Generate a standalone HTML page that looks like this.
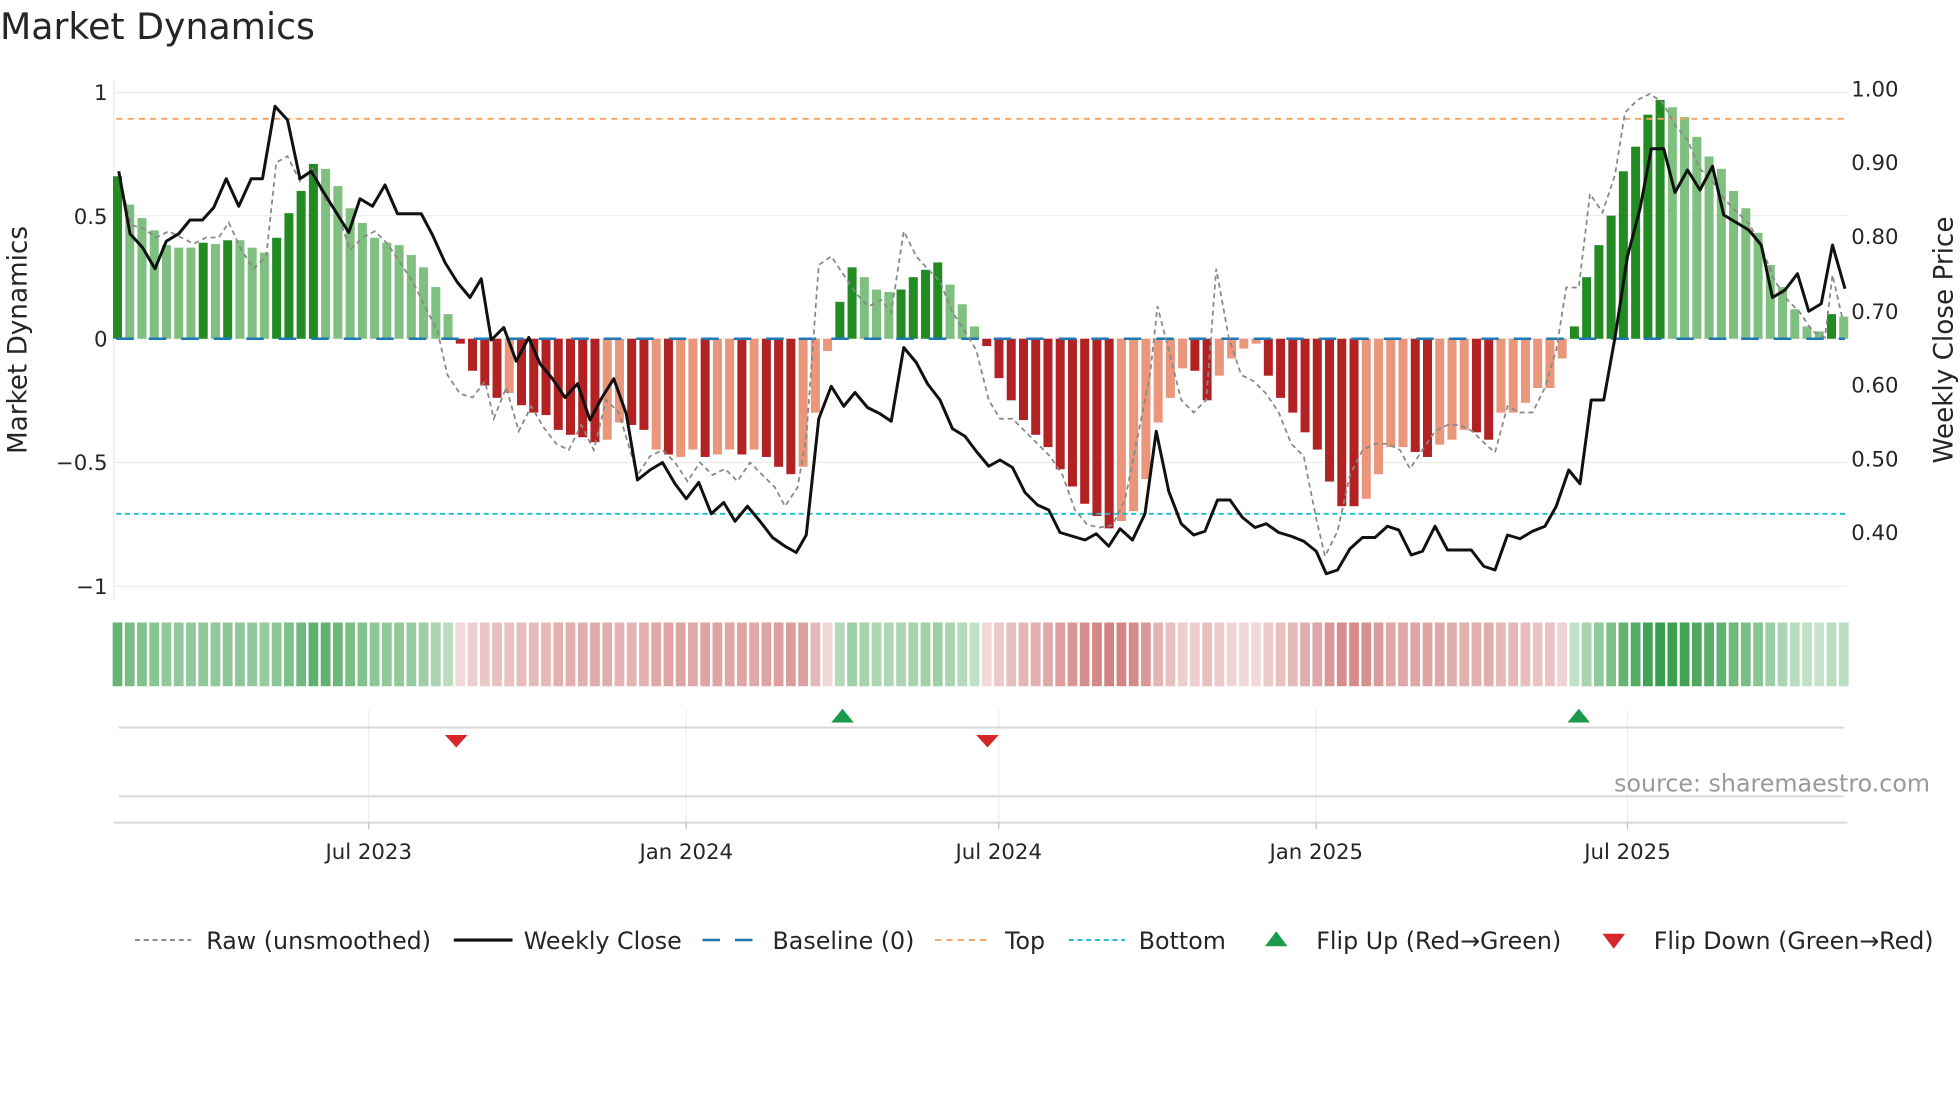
<!DOCTYPE html>
<html><head><meta charset="utf-8"><style>
html,body{margin:0;padding:0;background:#fff;width:1960px;height:1102px;overflow:hidden}
svg text{font-family:"DejaVu Sans","Liberation Sans",sans-serif;fill:#262626}
</style></head><body>
<svg id="s" width="1960" height="1102" viewBox="0 0 1568 881.6" xmlns="http://www.w3.org/2000/svg">
<text x="0" y="31" font-size="29" fill="#333">Market Dynamics</text>
<g stroke="#ececec" stroke-width="1">
<line x1="91" y1="74" x2="1478" y2="74"/><line x1="91" y1="172.5" x2="1478" y2="172.5"/>
<line x1="91" y1="271" x2="1478" y2="271"/><line x1="91" y1="370" x2="1478" y2="370"/>
<line x1="91" y1="469" x2="1478" y2="469"/><line x1="91" y1="64" x2="91" y2="480"/>
</g>
<g font-size="17" text-anchor="end">
<text x="86" y="80">1</text><text x="86" y="179">0.5</text><text x="86" y="277">0</text>
<text x="86" y="376">−0.5</text><text x="86" y="475">−1</text>
</g>
<g font-size="17">
<text x="1481" y="77">1.00</text><text x="1481" y="136">0.90</text><text x="1481" y="195">0.80</text>
<text x="1481" y="255">0.70</text><text x="1481" y="314">0.60</text><text x="1481" y="373">0.50</text><text x="1481" y="432">0.40</text>
</g>
<text transform="translate(21,272) rotate(-90)" font-size="21" text-anchor="middle">Market Dynamics</text>
<text transform="translate(1562,272) rotate(-90)" font-size="21" text-anchor="middle">Weekly Close Price</text>
<g id="bars"></g>
<line x1="93" y1="271" x2="1476" y2="271" stroke="#1f77b4" stroke-width="2" stroke-dasharray="14,12"/>
<line x1="93" y1="95" x2="1476" y2="95" stroke="#f4a460" stroke-width="1.5" stroke-dasharray="5,4"/>
<line x1="93" y1="411" x2="1476" y2="411" stroke="#17becf" stroke-width="1.5" stroke-dasharray="4,3"/>
<polyline id="raw" fill="none" stroke="#888" stroke-width="1.4" stroke-dasharray="4,3"/>
<polyline id="close" fill="none" stroke="#111" stroke-width="2.4" stroke-linejoin="round"/>
<g id="heat"></g>
<g stroke="#eee" stroke-width="1">
<line x1="295" y1="568" x2="295" y2="658"/><line x1="549" y1="568" x2="549" y2="658"/>
<line x1="799" y1="568" x2="799" y2="658"/><line x1="1053" y1="568" x2="1053" y2="658"/><line x1="1302" y1="568" x2="1302" y2="658"/>
</g>
<g stroke="#d6d6d6" stroke-width="1.5">
<line x1="95" y1="582" x2="1475" y2="582"/><line x1="95" y1="637" x2="1475" y2="637"/><line x1="91" y1="658" x2="1478" y2="658"/>
</g>
<g stroke="#bbb"><line x1="295" y1="658" x2="295" y2="663"/><line x1="549" y1="658" x2="549" y2="663"/><line x1="799" y1="658" x2="799" y2="663"/><line x1="1053" y1="658" x2="1053" y2="663"/><line x1="1302" y1="658" x2="1302" y2="663"/></g>
<polygon points="356,588 374,588 365,598" fill="#d62728"/>
<polygon points="781,588 799,588 790,598" fill="#d62728"/>
<polygon points="665,578 683,578 674,567" fill="#1a9a4a"/>
<polygon points="1254,578 1272,578 1263,567" fill="#1a9a4a"/>
<text x="1544" y="633" font-size="19" text-anchor="end" fill="#999" style="fill:#999">source: sharemaestro.com</text>
<g font-size="17" text-anchor="middle">
<text x="295" y="687">Jul 2023</text><text x="549" y="687">Jan 2024</text><text x="799" y="687">Jul 2024</text>
<text x="1053" y="687">Jan 2025</text><text x="1302" y="687">Jul 2025</text>
</g>
<g font-size="19">
<line x1="108" y1="752" x2="153" y2="752" stroke="#888" stroke-width="1.5" stroke-dasharray="4,3"/>
<text x="165" y="759">Raw (unsmoothed)</text>
<line x1="363" y1="752" x2="410" y2="752" stroke="#111" stroke-width="2.5"/>
<text x="419" y="759">Weekly Close</text>
<line x1="562" y1="752" x2="607" y2="752" stroke="#1f77b4" stroke-width="2" stroke-dasharray="14,12"/>
<text x="618" y="759">Baseline (0)</text>
<line x1="748" y1="752" x2="793" y2="752" stroke="#f4a460" stroke-width="1.5" stroke-dasharray="5,4"/>
<text x="804" y="759">Top</text>
<line x1="855" y1="752" x2="900" y2="752" stroke="#17becf" stroke-width="1.5" stroke-dasharray="4,3"/>
<text x="911" y="759">Bottom</text>
<polygon points="1012,757 1030,757 1021,745" fill="#1a9a4a"/>
<text x="1053" y="759">Flip Up (Red→Green)</text>
<polygon points="1282,747 1300,747 1291,759" fill="#d62728"/>
<text x="1323" y="759">Flip Down (Green→Red)</text>
</g>
</svg>
<script>
var D="d",L="l";
var v=[[.66,D],[.545,L],[.49,L],[.44,L],[.38,L],[.37,L],[.37,L],[.39,D],[.385,L],[.40,D],[.40,L],[.37,L],[.35,L],[.41,D],[.51,D],[.60,D],[.71,D],[.69,L],[.62,L],[.53,L],[.47,L],[.41,L],[.39,L],[.38,L],[.34,L],[.29,L],[.21,L],[.10,L],
[-.02,D],[-.13,D],[-.19,D],[-.24,D],[-.22,L],[-.27,D],[-.30,D],[-.31,D],[-.37,D],[-.39,D],[-.40,D],[-.42,D],[-.41,L],[-.34,L],[-.35,D],[-.37,D],[-.45,L],[-.47,D],[-.48,L],[-.45,L],[-.48,D],[-.47,L],[-.45,L],[-.47,D],[-.45,L],[-.48,D],[-.52,D],[-.55,D],[-.52,L],[-.30,L],[-.05,L],
[.15,D],[.29,D],[.25,L],[.20,L],[.19,L],[.20,D],[.25,D],[.28,D],[.31,D],[.22,L],[.14,L],[.05,L],
[-.03,D],[-.16,D],[-.25,D],[-.33,D],[-.39,D],[-.44,D],[-.53,D],[-.60,D],[-.67,D],[-.72,D],[-.77,D],[-.74,L],[-.70,L],[-.57,L],[-.34,L],[-.24,L],[-.12,L],[-.13,D],[-.25,D],[-.15,L],[-.08,L],[-.04,L],[-.02,L],[-.15,D],[-.24,D],[-.30,D],[-.38,D],[-.45,D],[-.58,D],[-.68,D],[-.68,D],[-.65,L],[-.55,L],[-.44,L],[-.44,L],[-.46,D],[-.48,D],[-.43,L],[-.41,L],[-.37,L],[-.38,D],[-.41,D],[-.30,L],[-.30,L],[-.26,L],[-.20,L],[-.20,L],[-.08,L],
[.05,D],[.25,D],[.38,D],[.50,D],[.68,D],[.78,D],[.91,D],[.97,D],[.94,L],[.90,L],[.82,L],[.74,L],[.69,L],[.60,L],[.53,L],[.43,L],[.30,L],[.21,L],[.12,L],[.05,L],[.03,L],[.10,D],[.09,L]];
var n=v.length,st=(1475-94)/(n-1),b="",h="";
for(var i=0;i<n;i++){var x=94+i*st,val=v[i][0],y=271-val*197,c;
if(val>=0)c=v[i][1]==D?"#228b22":"#7fbf7f";else c=v[i][1]==D?"#b22222":"#e9967a";
b+='<rect x="'+(x-3.6)+'" y="'+Math.min(y,271)+'" width="7.2" height="'+Math.abs(val*197)+'" fill="'+c+'"/>';
var a=Math.abs(val);var hc=val>=0?"rgba(40,150,60,"+(0.25+0.7*a)+")":"rgba(185,60,60,"+(0.18+0.6*a)+")";
h+='<rect x="'+(x-st/2+1)+'" y="498" width="'+(st-2)+'" height="51" fill="'+hc+'"/>';}
document.getElementById("bars").innerHTML=b;document.getElementById("heat").innerHTML=h;
document.getElementById("close").setAttribute("points","95,137 104,187 114,198 124,215 133,193 143,187 152,176 162,176 171,166 181,143 191,165 201,143 210,143 220,85 230,96 240,143 249,137 259,154 269,170 279,186 288,159 298,165 308,148 318,171 327,171 337,171 346,188 356,210 366,226 376,238 385,223 393,272 403,262 413,289 423,270 432,291 442,303 452,318 462,307 472,336 481,319 491,303 501,331 510,384 520,376 530,370 540,387 549,399 559,386 569,411 579,402 588,417 598,405 608,417 618,430 628,437 637,442 645,428 655,335 665,309 675,325 684,314 694,326 704,331 713,337 723,278 733,290 742,307 752,320 762,343 772,349 781,361 791,373 800,368 810,374 820,394 830,404 839,408 848,426 858,429 868,432 877,427 887,437 896,423 906,432 916,411 925,345 935,393 945,419 955,428 964,425 974,400 984,400 994,414 1004,422 1013,419 1023,426 1033,429 1043,433 1053,441 1061,459 1070,456 1080,439 1090,430 1100,430 1110,421 1119,424 1129,444 1138,441 1148,421 1158,440 1167,440 1177,440 1187,453 1196,456 1206,428 1216,431 1226,425 1236,421 1245,405 1255,376 1264,387 1273,320 1283,320 1292,270 1302,205 1312,167 1321,119 1331,119 1340,154 1350,136 1360,152 1370,133 1379,172 1389,178 1399,184 1409,196 1418,238 1428,232 1438,219 1447,249 1457,243 1466,196 1476,231");
document.getElementById("raw").setAttribute("points","95,140 105,180 115,183 125,190 135,185 145,190 155,195 165,190 175,190 183,178 193,200 203,215 213,205 221,130 230,125 240,145 250,135 260,160 270,170 280,200 290,190 300,185 310,195 320,210 330,225 340,245 350,265 358,300 368,315 378,318 388,305 395,335 405,310 415,345 425,325 435,342 445,355 455,360 465,340 475,360 485,320 495,330 510,380 520,365 530,360 540,370 550,385 560,370 570,380 580,375 590,385 600,370 610,380 620,390 628,405 638,390 645,350 655,212 665,205 675,220 685,235 695,245 705,240 713,250 723,185 733,205 742,215 752,225 762,250 772,265 781,280 791,320 800,335 810,335 820,345 830,355 840,365 850,380 860,408 870,420 880,422 890,420 900,400 910,350 920,300 926,245 935,280 945,320 955,330 965,320 973,215 983,270 993,300 1003,305 1013,315 1023,330 1033,355 1043,365 1053,415 1060,445 1070,425 1080,380 1090,360 1100,355 1110,355 1120,360 1128,375 1138,360 1148,345 1158,340 1168,340 1178,345 1188,355 1196,362 1206,325 1216,330 1226,330 1236,310 1245,280 1253,230 1263,230 1272,155 1282,170 1292,140 1300,90 1310,80 1320,75 1330,82 1340,100 1350,112 1360,135 1370,145 1380,160 1390,170 1400,180 1410,200 1420,225 1430,240 1440,250 1450,265 1460,270 1466,220 1474,255");
</script>
</body></html>
